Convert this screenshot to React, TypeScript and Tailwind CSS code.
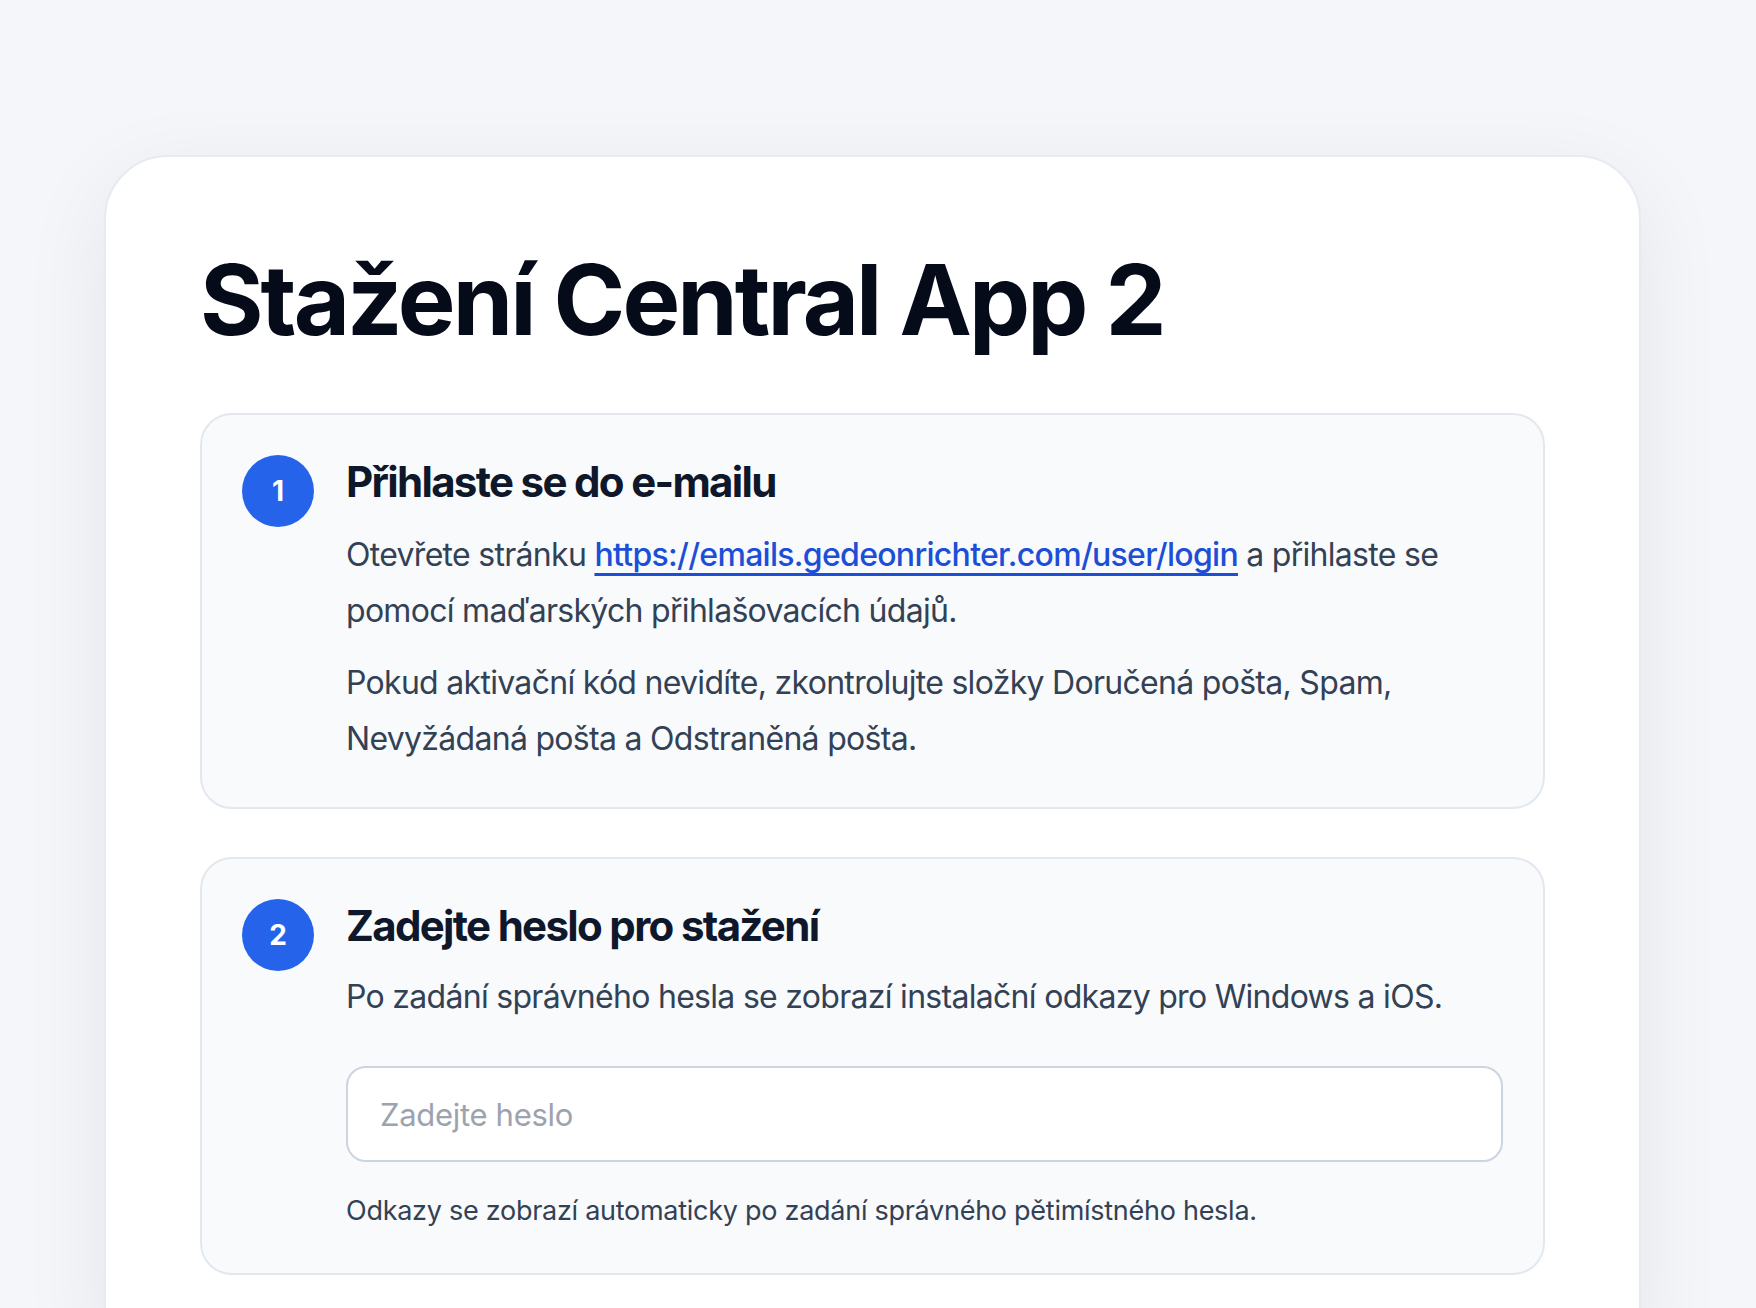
import React from 'react';

const StepBadge = ({ n }: { n: number }) => (
  <div className="flex h-[72px] w-[72px] shrink-0 items-center justify-center rounded-full bg-[#2563eb] text-[28px] font-bold text-white">
    {n}
  </div>
);

const App: React.FC = () => {
  return (
    <div
      className="min-h-screen bg-[#f5f6f9] pt-[155px] pl-[104px]"
      style={{ fontFamily: 'Inter, "Noto Sans", sans-serif' }}
    >
      <div className="w-[1537px] rounded-[64px] border-2 border-[#e6eaf1] bg-white px-[94px] pt-[88px] pb-[96px] shadow-[0_24px_90px_rgba(15,23,42,0.07)]">
        <h1 className="mb-[58px] text-[97px] font-bold leading-[110px] tracking-[-0.03em] text-[#060b1a]">
          Stažení Central App 2
        </h1>

        {/* step 1 */}
        <section className="flex gap-[32px] rounded-[32px] border-2 border-[#e3e8ef] bg-[#f8fafc] p-[40px]">
          <StepBadge n={1} />
          <div className="flex-1">
            <h2 className="text-[42px] font-bold leading-[54px] tracking-[-0.04em] text-[#0f172a]">
              Přihlaste se do e-mailu
            </h2>
            <p className="mt-[18px] text-[32px] leading-[56px] tracking-[-0.022em] text-[#334155]">
              Otevřete stránku{' '}
              <a
                href="#"
                className="font-medium text-[#1d4ed8] underline decoration-[3px] underline-offset-[7px]"
              >
                https://emails.gedeonrichter.com/user/login
              </a>{' '}
              a přihlaste se pomocí maďarských přihlašovacích údajů.
            </p>
            <p className="mt-[16px] text-[32px] leading-[56px] tracking-[-0.022em] text-[#334155]">
              Pokud aktivační kód nevidíte, zkontrolujte složky Doručená pošta, Spam, Nevyžádaná pošta a
              Odstraněná pošta.
            </p>
          </div>
        </section>

        {/* step 2 */}
        <section className="mt-[48px] flex gap-[32px] rounded-[32px] border-2 border-[#e3e8ef] bg-[#f8fafc] p-[40px]">
          <StepBadge n={2} />
          <div className="flex-1">
            <h2 className="text-[42px] font-bold leading-[54px] tracking-[-0.04em] text-[#0f172a]">
              Zadejte heslo pro stažení
            </h2>
            <p className="mt-[16px] text-[32px] leading-[56px] tracking-[-0.022em] text-[#334155]">
              Po zadání správného hesla se zobrazí instalační odkazy pro Windows a iOS.
            </p>
            <input
              type="password"
              placeholder="Zadejte heslo"
              className="mt-[41px] block h-[96px] w-full rounded-[20px] border-2 border-[#cbd5e1] bg-white px-[32px] text-[31px] tracking-[-0.01em] text-[#0f172a] outline-none placeholder:text-[#9ca3af]"
            />
            <p className="mt-[26px] text-[27px] leading-[45px] tracking-[-0.01em] text-[#334155]">
              Odkazy se zobrazí automaticky po zadání správného pětimístného hesla.
            </p>
          </div>
        </section>
      </div>
    </div>
  );
};

export default App;
